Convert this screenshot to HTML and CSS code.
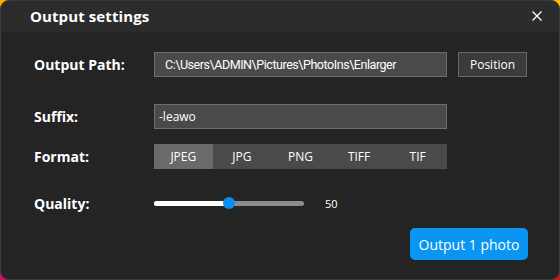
FILE: index.html
```html
<!DOCTYPE html>
<html>
<head>
<meta charset="utf-8">
<link rel="stylesheet" href="styles.css">
</head>
<body>
<div class="window">
  <div class="titlebar">
    <span class="title">Output settings</span>
    <svg class="close" width="12" height="12" viewBox="0 0 12 12"><path d="M1.5 1.5L10.5 10.5M10.5 1.5L1.5 10.5" stroke="#ffffff" stroke-width="1.3" fill="none"/></svg>
  </div>
  <div class="content">
    <div class="row r1">
      <div class="label">Output Path:</div>
      <div class="field path">C:\Users\ADMIN\Pictures\PhotoIns\Enlarger</div>
      <div class="btn-pos">Position</div>
    </div>
    <div class="row r2">
      <div class="label">Suffix:</div>
      <div class="field suffix">-leawo</div>
    </div>
    <div class="row r3">
      <div class="label">Format:</div>
      <div class="segments">
        <div class="seg active">JPEG</div>
        <div class="seg">JPG</div>
        <div class="seg">PNG</div>
        <div class="seg">TIFF</div>
        <div class="seg">TIF</div>
      </div>
    </div>
    <div class="row r4">
      <div class="label">Quality:</div>
      <div class="slider">
        <div class="track"><div class="fill" style="width:50%"></div></div>
        <div class="thumb" style="left:50%"></div>
      </div>
      <div class="value">50</div>
    </div>
    <div class="actions">
      <div class="btn-output">Output 1 photo</div>
    </div>
  </div>
</div>
</body>
</html>
```

FILE: styles.css
```css
html, body {
  margin: 0;
  padding: 0;
}
body {
  width: 560px;
  height: 280px;
  overflow: hidden;
  background:
    linear-gradient(to right, #d0105c 0%, #6a1030 50%, #c41a1a 100%) bottom / 100% 50% no-repeat,
    linear-gradient(to right, #f2b400 0%, #3a3a3a 50%, #f5c000 100%) top / 100% 50% no-repeat;
  font-family: "Open Sans", "Noto Sans", sans-serif;
  color: #ffffff;
}
.window {
  box-sizing: border-box;
  width: 560px;
  height: 280px;
  border: 1px solid #3a3a3a;
  border-radius: 9px;
  background: #242424;
  overflow: hidden;
  display: flex;
  flex-direction: column;
}
.titlebar {
  height: 31px;
  background: #2c2c2c;
  display: flex;
  align-items: center;
  justify-content: space-between;
  padding: 0 16px 0 29px;
  flex-shrink: 0;
}
.title {
  font-size: 15px;
  font-weight: 700;
  letter-spacing: 0.1px;
  margin-top: -1px;
}
.close {
  display: block;
  margin-top: -2px;
}
.content {
  display: flex;
  flex-direction: column;
  padding: 20px 31px 0 33px;
}
.row {
  display: flex;
  align-items: center;
}
.label {
  width: 120px;
  font-size: 14px;
  font-weight: 700;
  flex-shrink: 0;
}
.field {
  box-sizing: border-box;
  width: 293px;
  background: #4a4a4a;
  border: 1px solid #6e6e6e;
  font-size: 12px;
  display: flex;
  align-items: center;
}
.path {
  height: 25px;
  padding-left: 10px;
  font-family: "Roboto", "Open Sans", sans-serif;
  font-size: 12.5px;
  letter-spacing: -0.45px;
}
.suffix {
  height: 25px;
  padding-left: 4px;
}
.btn-pos {
  box-sizing: border-box;
  margin-left: 11px;
  width: 69px;
  height: 25px;
  background: #3b3b3b;
  border: 1px solid #686868;
  font-size: 12px;
  display: flex;
  align-items: center;
  justify-content: center;
}
.r2 { margin-top: 27px; }
.r3 { margin-top: 15px; }
.segments {
  display: flex;
  width: 293px;
  height: 25px;
  background: #4a4a4a;
}
.seg {
  flex: 1;
  display: flex;
  align-items: center;
  justify-content: center;
  font-size: 12px;
}
.seg.active {
  background: #6a6a6a;
}
.r4 {
  margin-top: 22px;
  height: 24px;
}
.slider {
  position: relative;
  width: 150px;
  height: 12px;
  display: flex;
  align-items: center;
}
.track {
  width: 100%;
  height: 5px;
  border-radius: 3px;
  background: #8c8c8c;
  overflow: hidden;
}
.fill {
  height: 100%;
  background: #ffffff;
}
.thumb {
  position: absolute;
  top: 0;
  width: 12px;
  height: 12px;
  margin-left: -6px;
  border-radius: 50%;
  background: #0a8ff0;
}
.value {
  margin-left: 21px;
  font-size: 11px;
}
.actions {
  display: flex;
  justify-content: flex-end;
  margin-top: 13px;
}
.btn-output {
  width: 118px;
  height: 32px;
  border-radius: 5px;
  background: #0a95f2;
  font-size: 14px;
  display: flex;
  align-items: center;
  justify-content: center;
}
```
